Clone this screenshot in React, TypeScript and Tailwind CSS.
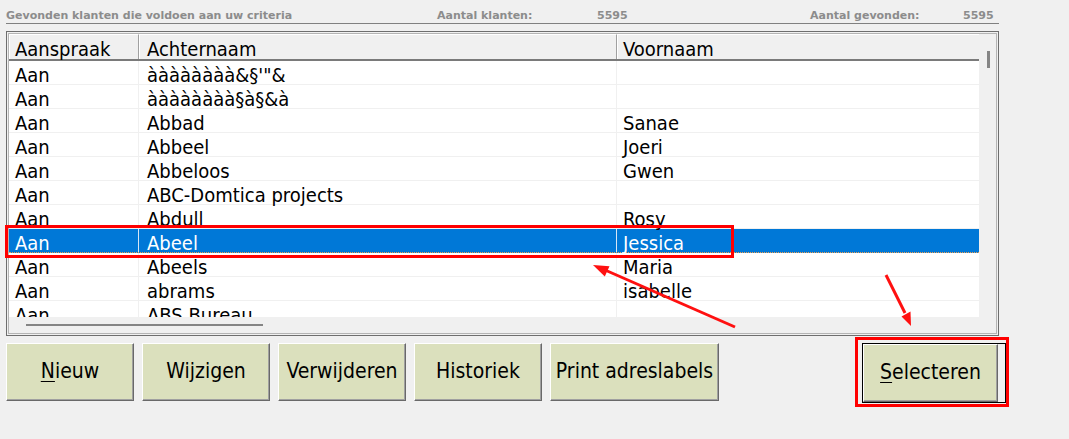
import React from "react";

type Row = { a: string; b: string; c: string; sel?: boolean };

const rows: Row[] = [
  { a: "Aan", b: "àààààààà&§'\"&", c: "" },
  { a: "Aan", b: "àààààààà§à§&à", c: "" },
  { a: "Aan", b: "Abbad", c: "Sanae" },
  { a: "Aan", b: "Abbeel", c: "Joeri" },
  { a: "Aan", b: "Abbeloos", c: "Gwen" },
  { a: "Aan", b: "ABC-Domtica projects", c: "" },
  { a: "Aan", b: "Abdull", c: "Rosy" },
  { a: "Aan", b: "Abeel", c: "Jessica", sel: true },
  { a: "Aan", b: "Abeels", c: "Maria" },
  { a: "Aan", b: "abrams", c: "isabelle" },
  { a: "Aan", b: "ABS Bureau", c: "" },
];

function Btn({
  children,
  w,
  def,
}: {
  children: React.ReactNode;
  w: string;
  def?: boolean;
}) {
  return (
    <div className={`${def ? "border border-black" : ""}`}>
      <div
        className={`${w} h-[58px] bg-[#dbe0bd] border-t border-l border-white shadow-[inset_-1px_-1px_0_#a0a0a0] border-r border-b border-r-[#696969] border-b-[#696969] flex items-center justify-center text-[21px] text-black`}
      >
        {children}
      </div>
    </div>
  );
}

export default function App() {
  return (
    <div className="w-[1069px] h-[439px] bg-[#f0f0f0] relative overflow-hidden font-['DejaVu_Sans_Condensed','DejaVu_Sans',sans-serif]">
      {/* Header line */}
      <div className="ml-[6px] w-[993px] h-[24px] border-b border-[#808080] pt-[9px] flex text-[11px] leading-[13px] font-bold text-[#8c8c8c] font-['DejaVu_Sans',sans-serif]">
        <span className="w-[431px]">Gevonden klanten die voldoen aan uw criteria</span>
        <span className="w-[160px]">Aantal klanten:</span>
        <span className="w-[213px]">5595</span>
        <span className="w-[153px]">Aantal gevonden:</span>
        <span>5595</span>
      </div>

      {/* Grid box */}
      <div className="ml-[6px] mt-[7px] w-[993px] h-[305px] border border-[#6e6e6e] p-[1px]">
        <div className="w-full h-full border border-[#b4b4b4] flex bg-[#f0f0f0]">
          <div className="w-[970px] flex flex-col">
            {/* column header */}
            <div className="h-[27px] flex border-b-2 border-[#7a7a7a] bg-[#f0f0f0] text-[20px] leading-[20px] text-black">
              <div className="w-[130px] border-r border-r-[#a0a0a0] border-t border-t-white border-l border-l-white pl-[5px] pt-[4px]">
                Aanspraak
              </div>
              <div className="w-[478px] border-r border-r-[#a0a0a0] border-t border-t-white border-l border-l-white pl-[7px] pt-[4px]">
                Achternaam
              </div>
              <div className="w-[362px] border-t border-t-white border-l border-l-white pl-[5px] pt-[4px]">
                Voornaam
              </div>
            </div>
            {/* rows */}
            <div className="h-[256px] overflow-hidden bg-white">
              {rows.map((r, i) => (
                <div
                  key={i}
                  className={`h-[24px] flex text-[20px] leading-[20px] ${
                    r.sel
                      ? "bg-[#0078d7] text-white border-b border-dotted border-b-[#f0a050]"
                      : "bg-white text-black border-b border-b-[#f0f0f0]"
                  }`}
                >
                  <div
                    className={`w-[130px] pl-[6px] pt-[4px] whitespace-nowrap border-r ${
                      r.sel ? "border-r-[#d6e6f5]" : "border-r-[#f0f0f0]"
                    }`}
                  >
                    {r.a}
                  </div>
                  <div
                    className={`w-[478px] pl-[8px] pt-[4px] whitespace-nowrap border-r ${
                      r.sel ? "border-r-[#d6e6f5]" : "border-r-[#f0f0f0]"
                    }`}
                  >
                    {r.b}
                  </div>
                  <div className="w-[362px] pl-[6px] pt-[4px] whitespace-nowrap">{r.c}</div>
                </div>
              ))}
            </div>
            {/* horizontal scrollbar */}
            <div className="h-[16px] bg-[#f0f0f0] pt-[7px] pl-[17px]">
              <div className="w-[237px] h-[2px] bg-[#858585]" />
            </div>
          </div>
          {/* vertical scrollbar */}
          <div className="w-[17px] bg-[#f0f0f0] pt-[17px] pl-[8px]">
            <div className="w-[3px] h-[17px] bg-[#858585]" />
          </div>
        </div>
      </div>

      {/* Buttons */}
      <div className="ml-[6px] mt-[7px] flex items-start">
        <div className="flex gap-[8px]">
          <Btn w="w-[128px]">
            <span>
              <span className="underline underline-offset-[3px] decoration-1">N</span>ieuw
            </span>
          </Btn>
          <Btn w="w-[128px]">Wijzigen</Btn>
          <Btn w="w-[128px]">Verwijderen</Btn>
          <Btn w="w-[128px]">Historiek</Btn>
          <Btn w="w-[169px]">Print adreslabels</Btn>
        </div>
        <div className="ml-[136px] -mt-[6px] w-[154px] h-[70px] border-[3px] border-[#ff0000] pl-[4px] pt-[3px]">
          <Btn w="w-[135px]" def>
            <span>
              <span className="underline underline-offset-[3px] decoration-1">S</span>electeren
            </span>
          </Btn>
        </div>
      </div>

      {/* Annotations */}
      <div className="absolute left-[5px] top-[225px] w-[729px] h-[33px] border-[3px] border-[#ff0000] pointer-events-none" />
      <svg
        className="absolute left-0 top-0 pointer-events-none"
        width="1069"
        height="439"
        viewBox="0 0 1069 439"
      >
        <line x1="735" y1="327" x2="605" y2="270" stroke="#ff1010" strokeWidth="3" />
        <polygon points="593,265 609.5,266.2 604.8,276.6" fill="#ff1010" />
        <line x1="886" y1="275" x2="905" y2="313" stroke="#ff1010" strokeWidth="3" />
        <polygon points="911,326 910.5,311.5 901.5,316.5" fill="#ff1010" />
      </svg>
    </div>
  );
}
